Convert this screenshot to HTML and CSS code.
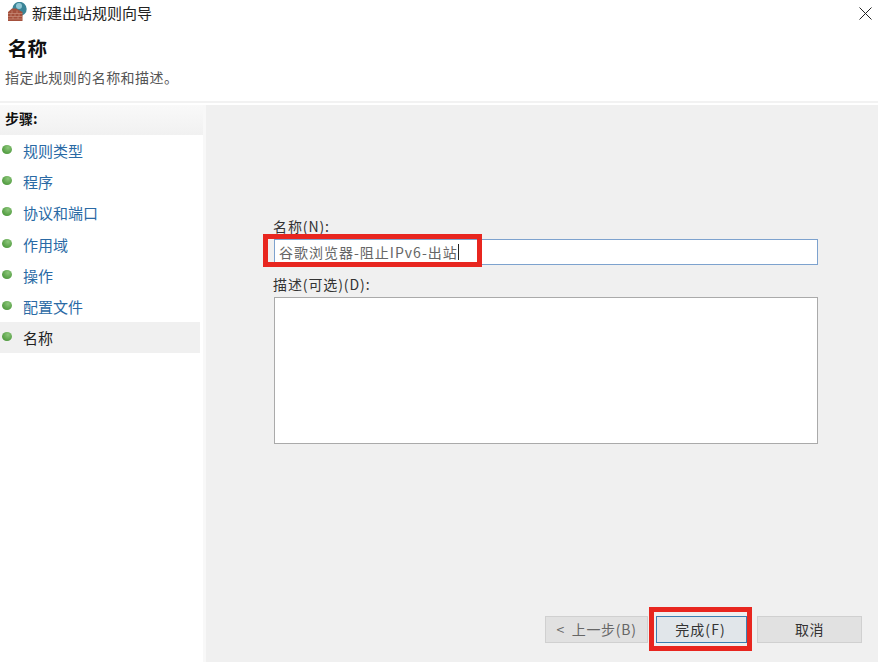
FILE: index.html
```html
<!DOCTYPE html>
<html lang="zh">
<head>
<meta charset="utf-8">
<title>新建出站规则向导</title>
<link rel="stylesheet" href="styles.css">
</head>
<body>
<div class="window">
  <header class="header">
    <div class="titlebar">
      <svg class="app-icon" width="20" height="20" viewBox="0 0 20 20">
        <circle cx="11.5" cy="7" r="7.2" fill="#3a8497"/>
        <circle cx="11" cy="4" r="3" fill="#8fc6d4"/>
        <path d="M0 10 L4 6.5 L8 6.5 L14.5 10 L14.5 19 L0 19 Z" fill="#a4503c"/>
        <path d="M0 11.5H14.5M0 14.5H14.5M0 17H14.5M4 8.5V11.5M9 8.5V11.5M3 11.5V14.5M7 11.5V14.5M11 11.5V14.5M5 14.5V17M10 14.5V17" stroke="#d09a88" stroke-width="0.6" fill="none"/>
      </svg>
      <span class="title">新建出站规则向导</span>
      <svg class="close" width="13" height="13" viewBox="0 0 13 13">
        <path d="M0.5 0.5L12.5 12.5M12.5 0.5L0.5 12.5" stroke="#222" stroke-width="1" fill="none"/>
      </svg>
    </div>
    <h1 class="page-title">名称</h1>
    <p class="page-desc">指定此规则的名称和描述。</p>
  </header>
  <div class="content">
    <nav class="steps">
      <div class="steps-head">步骤:</div>
      <ul class="step-list">
        <li class="step"><span class="dot"></span>规则类型</li>
        <li class="step"><span class="dot"></span>程序</li>
        <li class="step"><span class="dot"></span>协议和端口</li>
        <li class="step"><span class="dot"></span>作用域</li>
        <li class="step"><span class="dot"></span>操作</li>
        <li class="step"><span class="dot"></span>配置文件</li>
        <li class="step active"><span class="dot"></span>名称</li>
      </ul>
    </nav>
    <main class="main">
      <form class="form">
        <label class="label">名称(N):</label>
        <div class="input">谷歌浏览器-阻止IPv6-出站<span class="caret"></span></div>
        <label class="label label-desc">描述(可选)(D):</label>
        <div class="textarea"></div>
      </form>
      <div class="buttons">
        <div class="btn btn-back">&lt; 上一步(B)</div>
        <div class="btn btn-primary">完成(F)</div>
        <div class="btn btn-cancel">取消</div>
      </div>
      <div class="mark mark-name"></div>
      <div class="mark mark-finish"></div>
    </main>
  </div>
</div>
</body>
</html>
```
FILE: styles.css
```css
* { box-sizing: border-box; }
html, body { margin: 0; padding: 0; height: 100%; background: #fff; }
body { font-family: "Noto Sans CJK SC", "Liberation Sans", sans-serif; overflow: hidden; }
.window { width: 878px; height: 662px; display: flex; flex-direction: column; background: #fff; }
.header { height: 103px; margin-bottom: 2px; border-bottom: 2px solid #f2f2f2; flex: none; }
.titlebar { display: flex; align-items: center; height: 25px; padding: 0 6px 0 8px; }
.app-icon { flex: none; margin-top: -1px; }
.title { margin-left: 4px; font-size: 15px; line-height: 25px; color: #222; }
.close { margin-left: auto; margin-top: 1px; }
.page-title { margin: 10px 0 0 8px; font-size: 19.5px; line-height: 26px; font-weight: 700; color: #111; }
.page-desc { margin: 6px 0 0 5px; font-size: 14px; line-height: 20px; color: #555; letter-spacing: .45px; }
.content { flex: 1; display: flex; min-height: 0; }
.steps { width: 206px; flex: none; background: #fff; border-right: 3px solid #f8f8f8; }
.steps-head { height: 30px; background: linear-gradient(#f9f9f9, #f1f1f1); font-size: 14px; font-weight: 700; line-height: 27px; padding-left: 5px; color: #111; }
.step-list { list-style: none; margin: 0; padding: 0; width: 200px; }
.step { display: flex; align-items: center; height: 31.2px; font-size: 15px; color: #2a6aa5; padding-left: 2px; }
.step.active { color: #222; background: #f0f0f0; }
.dot { width: 10px; height: 9px; border-radius: 50%; margin-right: 11px; margin-top: -2px; background: radial-gradient(circle at 60% 30%, #8cc67a, #4f9a3e 75%); flex: none; }
.main { flex: 1; position: relative; background: #f0f0f0; display: flex; flex-direction: column; padding: 110px 0 19px 67px; }
.form { flex: 1; display: flex; flex-direction: column; }
.label { font-size: 14px; line-height: 22px; color: #333; letter-spacing: .9px; height: 24px; }
.input { width: 544px; margin-left: 1px; height: 26px; background: #fff; border: 1px solid #7da2ce; font-size: 14px; line-height: 24px; color: #666; padding-left: 4px; letter-spacing: 1px; display: flex; align-items: center; white-space: nowrap; }
.caret { width: 1px; height: 16px; background: #222; }
.label-desc { margin-top: 8px; }
.textarea { width: 544px; margin-left: 1px; height: 147px; background: #fff; border: 1px solid #aaa; }
.buttons { display: flex; padding-left: 272px; }
.btn { height: 27px; background: #e1e1e1; border: 1px solid #d0d0d0; font-size: 14px; line-height: 24px; text-align: center; color: #333; letter-spacing: .4px; white-space: nowrap; }
.btn-back { width: 103px; color: #666; word-spacing: 3px; letter-spacing: .7px; }
.btn-primary { width: 91px; margin-left: 8px; background: #e1e6ea; border-color: #3c7fb1; letter-spacing: 1.1px; text-indent: -2px; }
.btn-cancel { width: 105px; margin-left: 10px; }
.mark { position: absolute; border: 5px solid #e8261f; }
.mark-name { left: 57px; top: 129px; width: 219px; height: 33px; }
.mark-finish { left: 443px; top: 502px; width: 103px; height: 44px; }
```
